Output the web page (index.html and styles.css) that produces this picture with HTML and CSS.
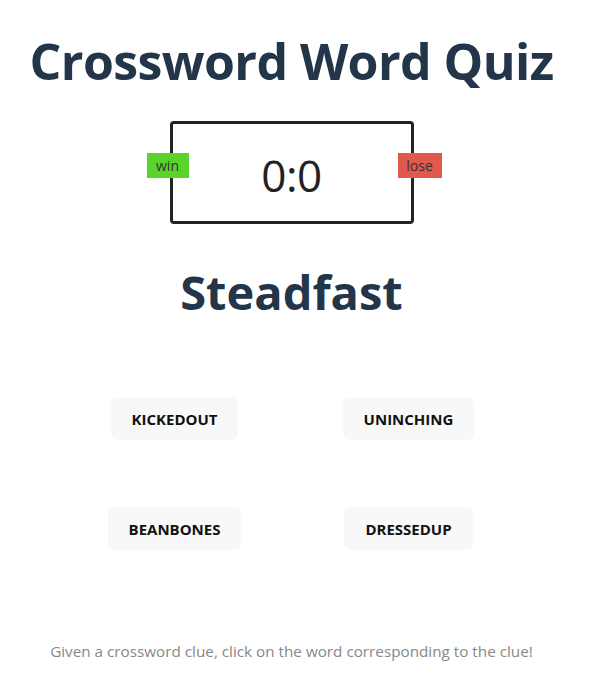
FILE: index.html
```html
<!DOCTYPE html>
<html lang="en">
<head>
  <meta charset="UTF-8" />
  <title>Crossword Word Quiz</title>
  <link rel="stylesheet" href="styles.css">
</head>
<body>
  <h1 class="title">Crossword Word Quiz</h1>

  <div class="score-wrap">
    <div class="score-box">
      <span class="tag tag-win">win</span>
      <span class="score">0:0</span>
      <span class="tag tag-lose">lose</span>
    </div>
  </div>

  <h2 class="clue">Steadfast</h2>

  <div class="choices">
    <div class="cell"><button class="choice">KICKEDOUT</button></div>
    <div class="cell"><button class="choice">UNINCHING</button></div>
    <div class="cell"><button class="choice">BEANBONES</button></div>
    <div class="cell"><button class="choice">DRESSEDUP</button></div>
  </div>

  <p class="hint">Given a crossword clue, click on the word corresponding to the clue!</p>
</body>
</html>
```

FILE: styles.css
```css
body {
  margin: 0;
  padding-right: 6px;
  font-family: 'Open Sans', 'Noto Sans', sans-serif;
  background: #ffffff;
  text-align: center;
}

.title {
  margin: 29px 0 0;
  font-size: 50px;
  line-height: 64px;
  letter-spacing: -0.6px;
  font-weight: 700;
  color: #223549;
  white-space: nowrap;
}

.score-wrap {
  display: flex;
  justify-content: center;
  margin-top: 28px;
}

.score-box {
  position: relative;
  width: 238px;
  height: 97px;
  border: 3px solid #222;
  border-radius: 4px;
  display: flex;
  align-items: center;
  justify-content: center;
}

.score {
  font-size: 44px;
  font-weight: 400;
  letter-spacing: -0.5px;
  color: #222;
  margin-top: 4px;
}

.tag {
  position: absolute;
  top: 29px;
  height: 25px;
  line-height: 25px;
  font-size: 14px;
  color: #333;
}

.tag-win {
  left: -26px;
  width: 42px;
  background: #5ad42a;
}

.tag-lose {
  right: -31px;
  width: 44px;
  background: #e1584c;
}

.clue {
  margin: 36px 0 0;
  font-size: 47px;
  line-height: 64px;
  font-weight: 700;
  color: #223549;
}

.choices {
  display: grid;
  grid-template-columns: 234px 234px;
  justify-content: center;
  row-gap: 67px;
  margin-top: 73px;
}

.cell {
  display: flex;
  justify-content: center;
}

.choice {
  height: 43px;
  padding: 0 21px;
  border: none;
  border-radius: 7px;
  background: #f8f8f8;
  font-family: 'Open Sans', 'Noto Sans', sans-serif;
  font-size: 15px;
  font-weight: 700;
  color: #111;
}

.hint {
  margin: 91px 0 0;
  font-size: 15.25px;
  line-height: 20px;
  color: #888;
}
```
